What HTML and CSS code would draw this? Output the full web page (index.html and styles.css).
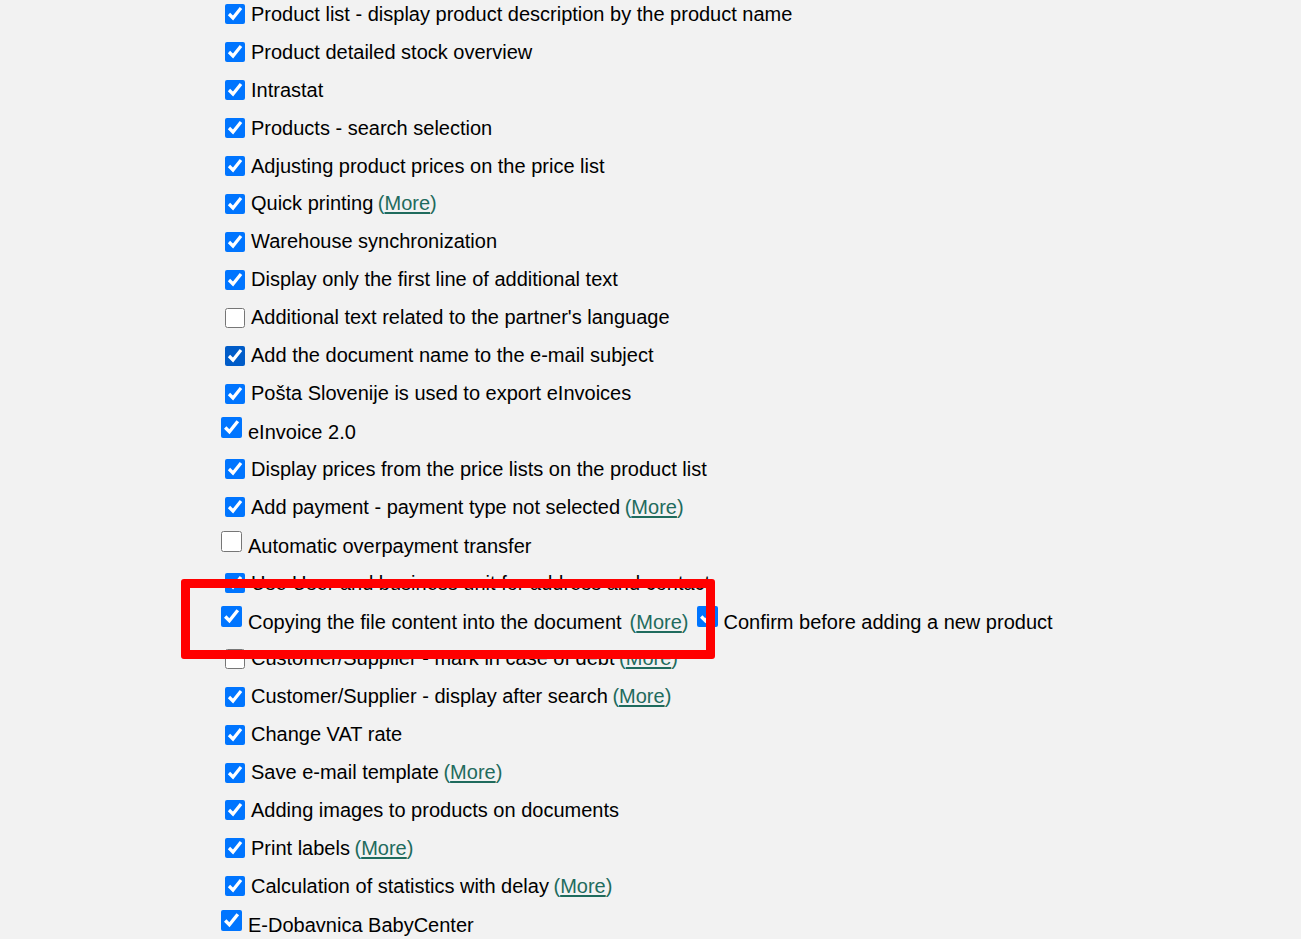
FILE: index.html
```html
<!DOCTYPE html>
<html lang="en">
<head>
<meta charset="utf-8">
<title>Settings</title>
<link rel="stylesheet" href="styles.css">
</head>
<body>
<div class="page">
  <div class="list">
    <div class="row"><input class="cb" type="checkbox" checked><span class="txt">Product list - display product description by the product name</span></div>
    <div class="row"><input class="cb" type="checkbox" checked><span class="txt">Product detailed stock overview</span></div>
    <div class="row"><input class="cb" type="checkbox" checked><span class="txt">Intrastat</span></div>
    <div class="row"><input class="cb" type="checkbox" checked><span class="txt">Products - search selection</span></div>
    <div class="row"><input class="cb" type="checkbox" checked><span class="txt">Adjusting product prices on the price list</span></div>
    <div class="row"><input class="cb" type="checkbox" checked><span class="txt">Quick printing <a class="more" href="#">(<u>More</u>)</a></span></div>
    <div class="row"><input class="cb" type="checkbox" checked><span class="txt">Warehouse synchronization</span></div>
    <div class="row"><input class="cb" type="checkbox" checked><span class="txt">Display only the first line of additional text</span></div>
    <div class="row"><input class="cb" type="checkbox"><span class="txt">Additional text related to the partner's language</span></div>
    <div class="row"><input class="cb cb-hover" type="checkbox" checked><span class="txt">Add the document name to the e-mail subject</span></div>
    <div class="row"><input class="cb" type="checkbox" checked><span class="txt">Pošta Slovenije is used to export eInvoices</span></div>
    <div class="row row-alt"><input class="cb cb-alt" type="checkbox" checked><span class="txt">eInvoice 2.0</span></div>
    <div class="row"><input class="cb" type="checkbox" checked><span class="txt">Display prices from the price lists on the product list</span></div>
    <div class="row"><input class="cb" type="checkbox" checked><span class="txt">Add payment - payment type not selected <a class="more" href="#">(<u>More</u>)</a></span></div>
    <div class="row row-alt"><input class="cb cb-alt" type="checkbox"><span class="txt">Automatic overpayment transfer</span></div>
    <div class="row"><input class="cb" type="checkbox" checked><span class="txt">Use User and business unit for address and contact</span></div>
    <div class="row row-alt"><input class="cb cb-alt" type="checkbox" checked><span class="txt">Copying the file content into the document</span><a class="more more-gap" href="#">(<u>More</u>)</a><input class="cb cb-alt cb-inline" type="checkbox" checked><span class="txt">Confirm before adding a new product</span></div>
    <div class="row"><input class="cb" type="checkbox"><span class="txt">Customer/Supplier - mark in case of debt <a class="more" href="#">(<u>More</u>)</a></span></div>
    <div class="row"><input class="cb" type="checkbox" checked><span class="txt">Customer/Supplier - display after search <a class="more" href="#">(<u>More</u>)</a></span></div>
    <div class="row"><input class="cb" type="checkbox" checked><span class="txt">Change VAT rate</span></div>
    <div class="row"><input class="cb" type="checkbox" checked><span class="txt">Save e-mail template <a class="more" href="#">(<u>More</u>)</a></span></div>
    <div class="row"><input class="cb" type="checkbox" checked><span class="txt">Adding images to products on documents</span></div>
    <div class="row"><input class="cb" type="checkbox" checked><span class="txt">Print labels <a class="more" href="#">(<u>More</u>)</a></span></div>
    <div class="row"><input class="cb" type="checkbox" checked><span class="txt">Calculation of statistics with delay <a class="more" href="#">(<u>More</u>)</a></span></div>
    <div class="row row-alt"><input class="cb cb-alt" type="checkbox" checked><span class="txt">E-Dobavnica BabyCenter</span></div>
  </div>
  <div class="highlight"></div>
</div>
</body>
</html>
```

FILE: styles.css
```css
html, body {
  margin: 0;
  padding: 0;
  background: #f2f2f2;
  overflow: hidden;
}

.page {
  position: relative;
  display: flow-root;
  height: 939px;
  overflow: hidden;
  font-family: "Liberation Sans", Arial, sans-serif;
  font-size: 20px;
  color: #000;
}

.list {
  margin-top: -4.5px;
  padding-left: 225px;
}

.row {
  display: flex;
  align-items: center;
  height: 37.92px;
  white-space: nowrap;
}

.cb {
  width: 20px;
  height: 20px;
  margin: 0 6px 0 0;
  flex: none;
}

.cb-hover {
  accent-color: #005cc8;
}

.cb-alt {
  width: 21px;
  height: 21px;
  margin: 0 6px 8px -4px;
}

.cb-inline {
  margin-left: 8px;
}

.txt {
  line-height: 23px;
}

.row-alt .txt,
.row-alt .more-gap {
  padding-top: 3px;
}

.more {
  color: #1f6b5d;
  text-decoration: none;
  margin-left: -1px;
}

.more u {
  text-decoration-thickness: 2px;
  text-underline-offset: 2px;
}

.more-gap {
  margin-left: 8px;
  line-height: 23px;
}

.highlight {
  position: absolute;
  left: 181px;
  top: 579px;
  width: 516px;
  height: 62px;
  border: 9px solid #ff0000;
  border-radius: 3px;
}
```
